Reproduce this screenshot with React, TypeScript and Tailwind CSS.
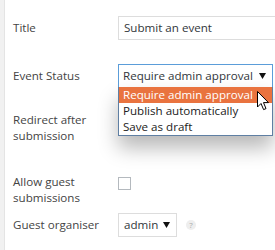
import React from "react";

function Arrow({ className = "" }: { className?: string }) {
  return (
    <svg width="7" height="6" viewBox="0 0 7 6" className={className}>
      <path d="M0 0 L7 0 L3.5 6 Z" fill="#111" />
    </svg>
  );
}

function Cursor() {
  return (
    <svg width="13" height="20" viewBox="0 0 13 20">
      <path
        d="M0.5 0.5 L0.5 16 L4 12.5 L6.6 18.6 L9 17.6 L6.5 11.6 L11.5 11.6 Z"
        fill="#fff"
        stroke="#000"
        strokeWidth="1"
        strokeLinejoin="round"
      />
    </svg>
  );
}

export default function App() {
  return (
    <div
      className="relative flex w-[275px] h-[250px] overflow-hidden bg-white text-[11.6px] text-[#444]"
      style={{ fontFamily: '"Open Sans", "Noto Sans", sans-serif' }}
    >
      <div className="w-[5px] shrink-0 bg-[#f1f1f1] border-r border-[#e4e4e4]" />
      <div className="flex flex-col pl-[8px]">
        {/* Title */}
        <div className="mt-[16px] flex h-[24px] items-center">
          <div className="w-[105px] shrink-0 leading-[16px]">Title</div>
          <div className="flex h-[24px] w-[165px] shrink-0 items-center whitespace-nowrap border border-[#dddddd] pl-[5px] text-[#32373c]">
            Submit an event
          </div>
        </div>

        {/* Event Status */}
        <div className="mt-[24px] flex h-[24px] items-center">
          <div className="w-[105px] shrink-0 leading-[16px]">Event Status</div>
          <div className="relative">
            <div className="flex h-[24px] w-[155px] items-center justify-between whitespace-nowrap border border-[#5b9dd9] pl-[4px] pr-[6px] text-[#32373c]">
              <span>Require admin approval</span>
              <Arrow />
            </div>
            <div className="absolute left-0 top-[23px] z-10 w-[155px] whitespace-nowrap border-x border-b border-[#5f7fa3] bg-white leading-[16px] text-[#222] shadow-[0_12px_20px_rgba(0,0,0,0.28)]">
              <div className="h-[16px] bg-[#e9733f] pl-[4px] text-white">Require admin approval</div>
              <div className="h-[16px] pl-[4px]">Publish automatically</div>
              <div className="h-[16px] pl-[4px]">Save as draft</div>
            </div>
            <div className="absolute left-[139px] top-[27px] z-20">
              <Cursor />
            </div>
          </div>
        </div>

        {/* Redirect */}
        <div className="mt-[24px] flex h-[32px]">
          <div className="w-[105px] shrink-0 leading-[16px]">
            Redirect after
            <br />
            submission
          </div>
        </div>

        {/* Allow guest */}
        <div className="mt-[30px] flex h-[32px]">
          <div className="w-[105px] shrink-0 leading-[16px]">
            Allow guest
            <br />
            submissions
          </div>
          <div className="mt-[3px] h-[13px] w-[13px] border border-[#b4b9be] bg-white" />
        </div>

        {/* Guest organiser */}
        <div className="mt-[7px] flex h-[24px] items-center">
          <div className="w-[105px] shrink-0 leading-[16px]">Guest organiser</div>
          <div className="flex h-[24px] w-[59px] items-center justify-between whitespace-nowrap border border-[#dddddd] pl-[5px] pr-[6px] text-[#32373c]">
            <span>admin</span>
            <Arrow />
          </div>
          <div className="ml-[9px] flex h-[10px] w-[10px] items-center justify-center rounded-full bg-[#eeeeee] text-[8px] leading-none text-[#aaa]">
            ?
          </div>
        </div>
      </div>
    </div>
  );
}
